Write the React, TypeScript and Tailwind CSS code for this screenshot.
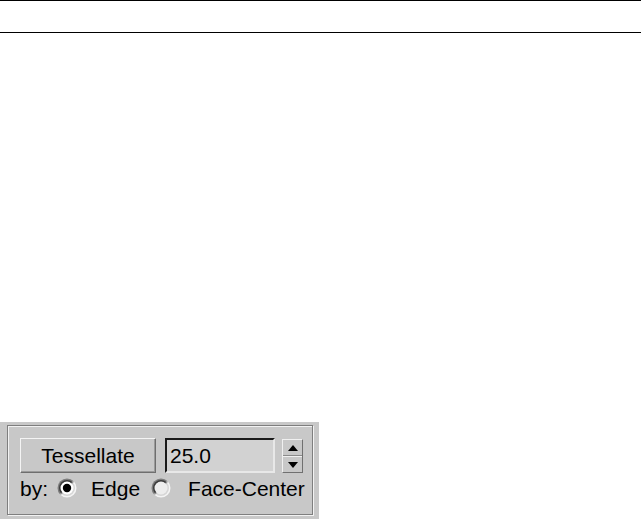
import React from "react";

const Radio: React.FC<{ checked?: boolean }> = ({ checked }) => (
  <svg width="20" height="20" viewBox="0 0 20 20" className="shrink-0">
    <defs>
      <linearGradient id="outer" x1="0" y1="0" x2="1" y2="1">
        <stop offset="0.45" stopColor="#7c7c7c" />
        <stop offset="0.55" stopColor="#f4f4f4" />
      </linearGradient>
      <linearGradient id="inner" x1="0" y1="0" x2="1" y2="1">
        <stop offset="0.45" stopColor="#3a3a3a" />
        <stop offset="0.55" stopColor="#d6d6d6" />
      </linearGradient>
    </defs>
    <circle cx="10" cy="10" r="9.5" fill="url(#outer)" />
    <circle cx="10" cy="10" r="8" fill="url(#inner)" />
    <circle cx="10" cy="10" r="6.5" fill={checked ? "#ffffff" : "#ededed"} />
    {checked && <circle cx="10" cy="10" r="4.2" fill="#000000" />}
  </svg>
);

export default function App() {
  return (
    <div
      className="w-[641px] h-[519px] bg-white flex flex-col overflow-hidden"
      style={{ fontFamily: '"Liberation Sans", Arial, sans-serif' }}
    >
      <div className="h-[33px] border-t border-b border-black" />
      <div className="mt-auto w-[319px] h-[97px] bg-[#c8c8c8] pt-[3px] pl-[7px]">
        <div className="w-[306px] h-[90px] border border-[#7e7e7e] shadow-[1px_1px_0_#f2f2f2,inset_1px_1px_0_#f2f2f2] pl-[12px] pt-[12px] text-[21px] leading-none text-black">
          <div className="flex items-start">
            <div className="w-[136px] h-[35px] border border-t-[#f4f4f4] border-l-[#f4f4f4] border-r-[#6e6e6e] border-b-[#6e6e6e] shadow-[inset_-1px_-1px_0_#9a9a9a] flex items-center justify-center pb-[1px]">
              Tessellate
            </div>
            <div className="ml-[9px] w-[110px] h-[35px] bg-[#d2d2d2] border-2 border-t-[#1a1a1a] border-l-[#1a1a1a] border-r-[#e8e8e8] border-b-[#e8e8e8] flex items-center pl-[3px] pb-[1px]">
              25.0
            </div>
            <div className="ml-[7px] mt-[1px] w-[21px] h-[34px] flex flex-col border border-t-[#f0f0f0] border-l-[#f0f0f0] border-r-[#707070] border-b-[#707070]">
              <div className="flex-1 flex items-center justify-center border-b border-[#8a8a8a]">
                <svg width="10" height="6" viewBox="0 0 10 6">
                  <polygon points="5,0 10,6 0,6" fill="#000" />
                </svg>
              </div>
              <div className="flex-1 flex items-center justify-center border-t border-[#f0f0f0]">
                <svg width="10" height="6" viewBox="0 0 10 6">
                  <polygon points="0,0 10,0 5,6" fill="#000" />
                </svg>
              </div>
            </div>
          </div>
          <div className="flex items-center h-[31px] pb-[1px]">
            <span>by:</span>
            <span className="ml-[9px]">
              <Radio checked />
            </span>
            <span className="ml-[14px]">Edge</span>
            <span className="ml-[11px]">
              <Radio />
            </span>
            <span className="ml-[17px] whitespace-nowrap">Face-Center</span>
          </div>
        </div>
      </div>
    </div>
  );
}
